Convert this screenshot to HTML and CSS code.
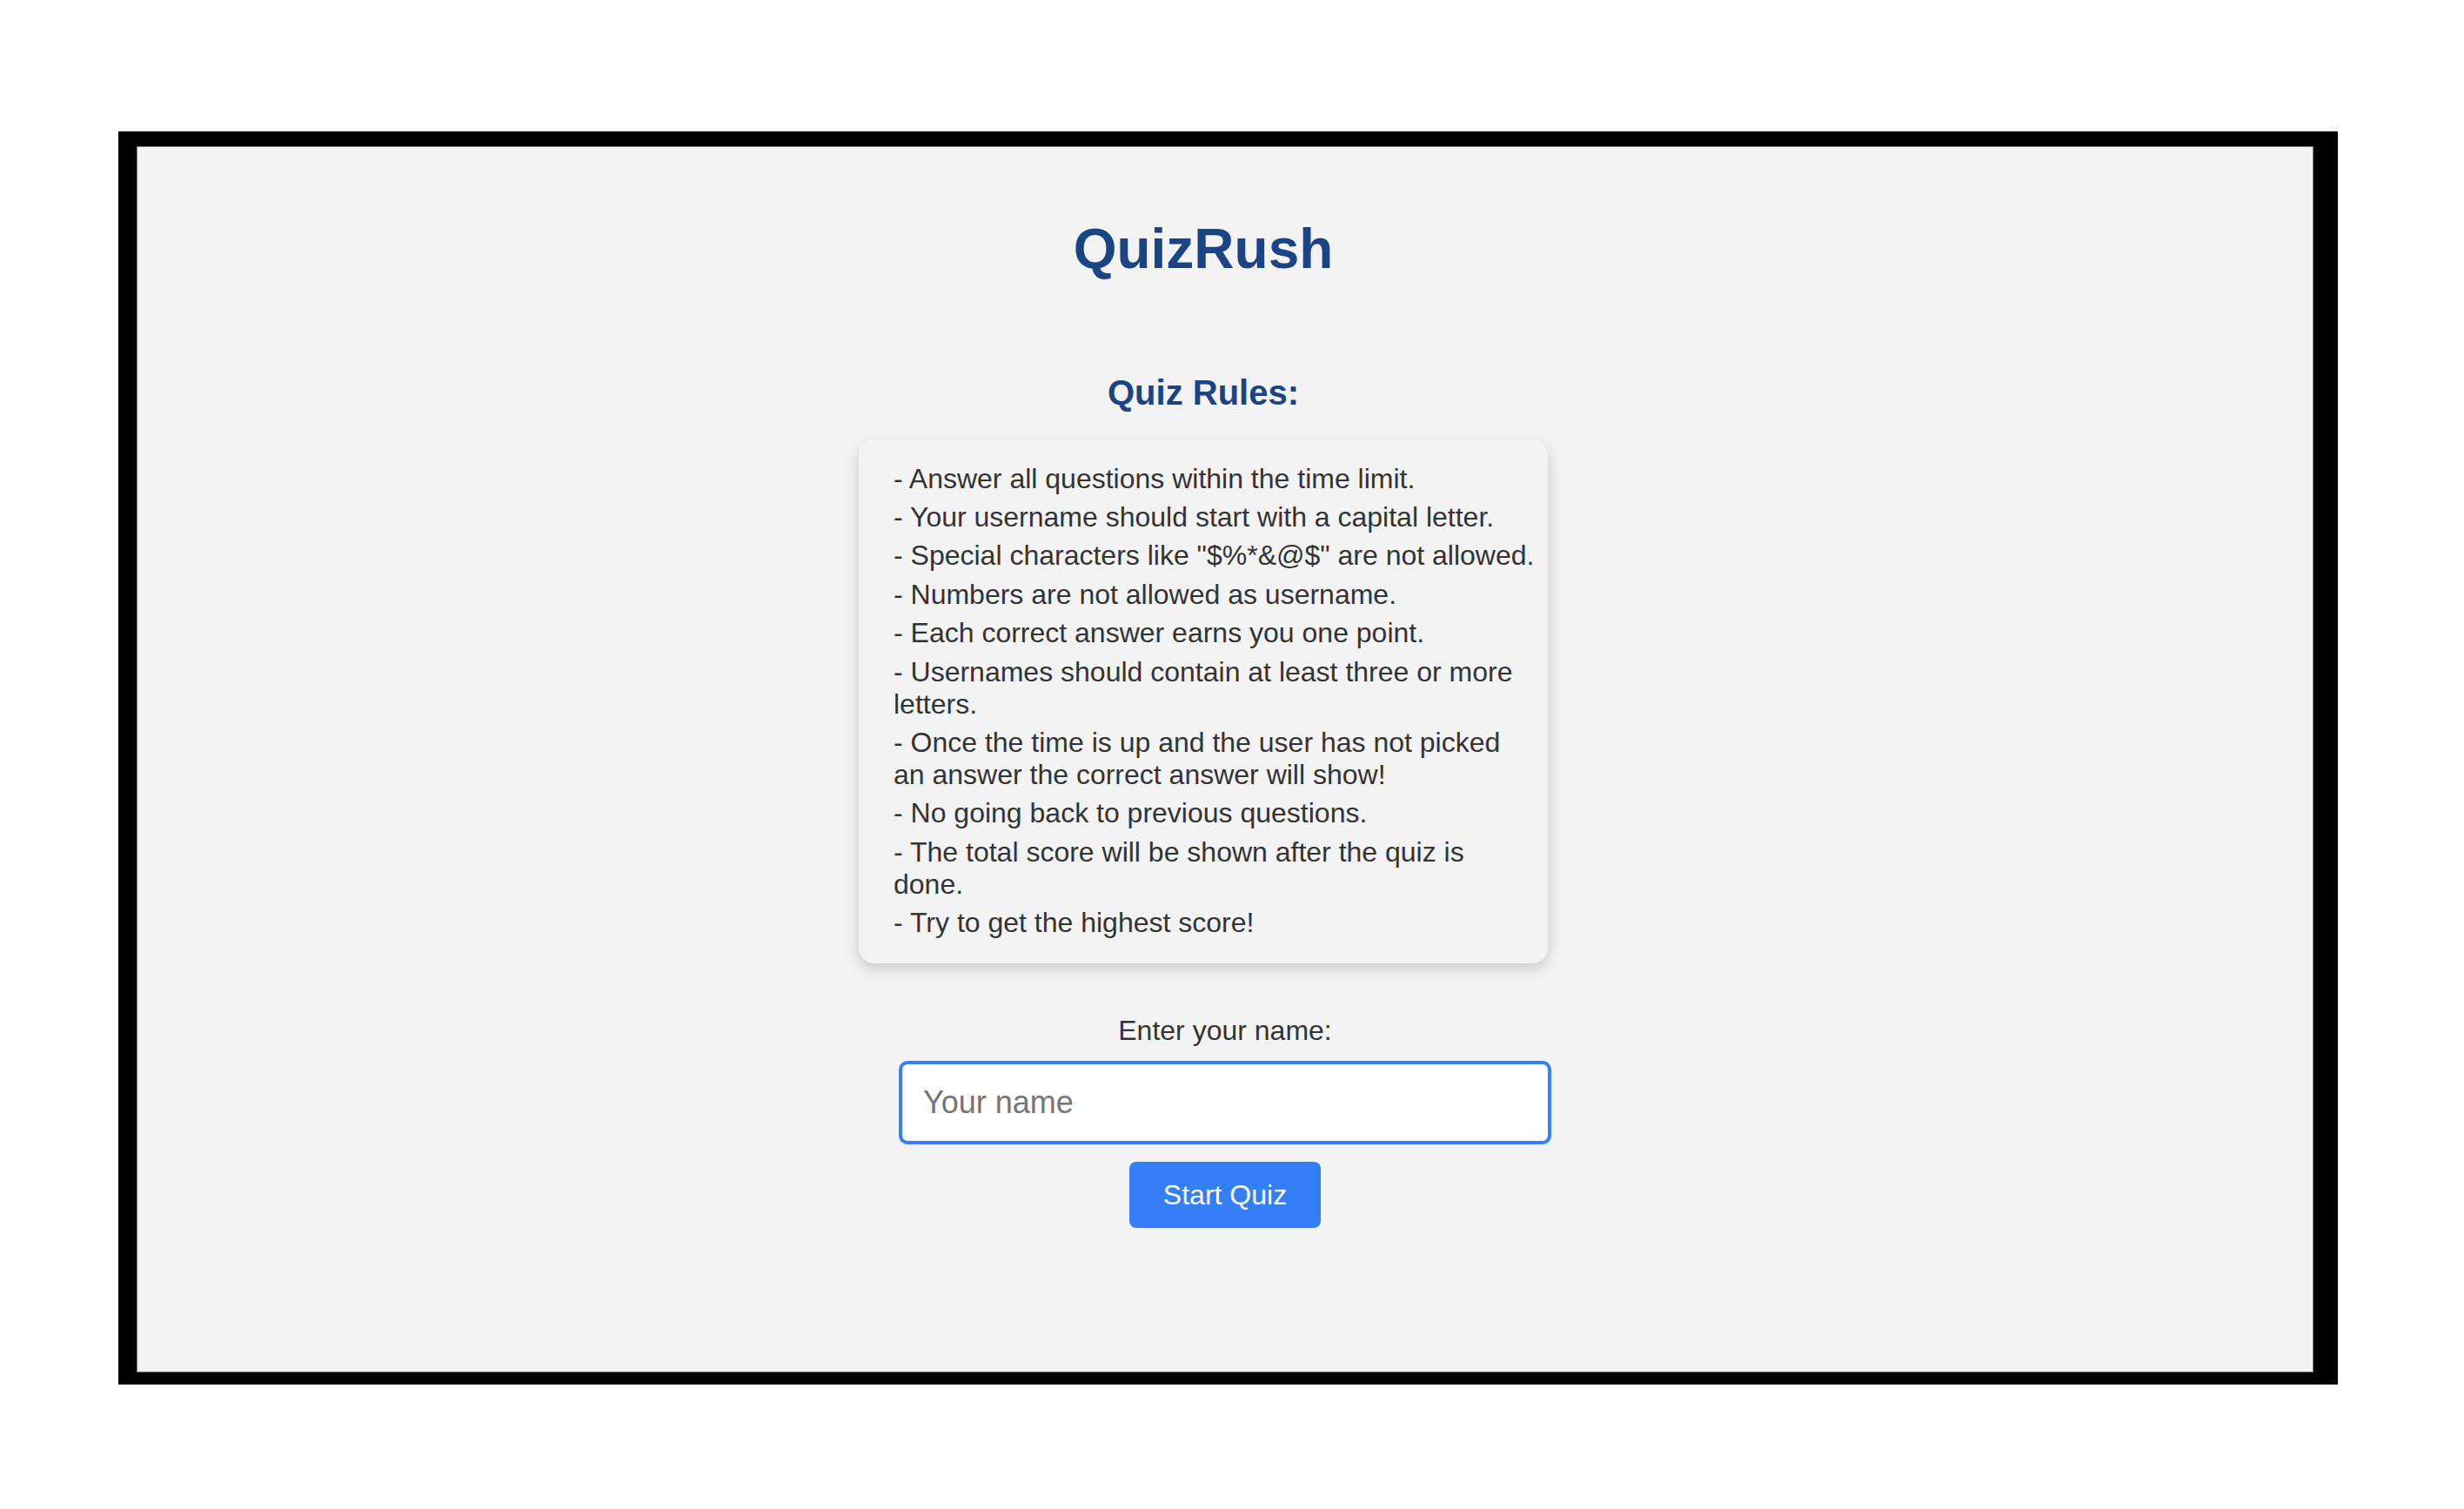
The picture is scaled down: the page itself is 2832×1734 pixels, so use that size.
FILE: index.html
```html
<!DOCTYPE html>
<html lang="en">
<head>
<meta charset="utf-8">
<title>QuizRush</title>
<link rel="stylesheet" href="styles.css">
</head>
<body>
<div class="frame">
  <main class="screen">
    <section class="intro">
      <h1 class="title">QuizRush</h1>
      <h2 class="rules-heading">Quiz Rules:</h2>
      <ul class="rules">
        <li>- Answer all questions within the time limit.</li>
        <li>- Your username should start with a capital letter.</li>
        <li>- Special characters like "$%*&amp;@$" are not allowed.</li>
        <li>- Numbers are not allowed as username.</li>
        <li>- Each correct answer earns you one point.</li>
        <li>- Usernames should contain at least three or more letters.</li>
        <li>- Once the time is up and the user has not picked an answer the correct answer will show!</li>
        <li>- No going back to previous questions.</li>
        <li>- The total score will be shown after the quiz is done.</li>
        <li>- Try to get the highest score!</li>
      </ul>
    </section>
    <form class="entry" onsubmit="return false;">
      <label class="entry-label" for="username">Enter your name:</label>
      <input class="entry-input" id="username" type="text" placeholder="Your name">
      <button class="entry-button" type="submit">Start Quiz</button>
    </form>
  </main>
</div>
</body>
</html>
```
FILE: styles.css
```css
html, body {
  margin: 0;
  padding: 0;
  background: #ffffff;
}

body {
  font-family: "Liberation Sans", Arial, sans-serif;
}

.frame {
  margin: 151px 0 0 136px;
  width: 2551px;
  height: 1440px;
  box-sizing: border-box;
  background: #000000;
  padding: 17px 28px 14px 21px;
}

.screen {
  height: 100%;
  box-sizing: border-box;
  border: 1px solid #7d7d7d;
  background: #f3f3f3;
  display: flex;
  flex-direction: column;
  align-items: center;
  padding-top: 80px;
}

.intro {
  display: flex;
  flex-direction: column;
  align-items: center;
  margin-right: 50px;
}

.title {
  margin: 0;
  font-size: 64px;
  line-height: 74px;
  font-weight: bold;
  color: #1a4483;
}

.rules-heading {
  margin: 105px 0 0;
  font-size: 40px;
  line-height: 46px;
  font-weight: bold;
  color: #1a4483;
}

.rules {
  margin: 31px 0 0;
  width: 792px;
  box-sizing: border-box;
  padding: 26.5px 13px 28px 40px;
  list-style: none;
  background: #f3f3f3;
  border-radius: 18px;
  box-shadow: 0 6px 16px rgba(0, 0, 0, 0.18);
  display: flex;
  flex-direction: column;
  gap: 7.7px;
  font-size: 32px;
  line-height: 36.8px;
  color: #333333;
}

.rules li {
  margin: 0;
  padding: 0;
}

.entry {
  margin-top: 58.5px;
  display: flex;
  flex-direction: column;
  align-items: center;
}

.entry-label {
  font-size: 32px;
  line-height: 36.8px;
  color: #333333;
}

.entry-input {
  margin-top: 17px;
  width: 750px;
  height: 96px;
  box-sizing: border-box;
  border: 4px solid #3580f4;
  border-radius: 10px;
  padding: 0 24px;
  background: #ffffff;
  font-family: "Liberation Sans", Arial, sans-serif;
  font-size: 36px;
  color: #333333;
  outline: none;
}

.entry-input::placeholder {
  color: #757575;
}

.entry-button {
  margin-top: 20px;
  width: 220px;
  height: 76px;
  border: none;
  border-radius: 8px;
  background: #347ff5;
  color: #ffffff;
  font-family: "Liberation Sans", Arial, sans-serif;
  font-size: 32px;
  padding: 0;
  cursor: pointer;
}
```
